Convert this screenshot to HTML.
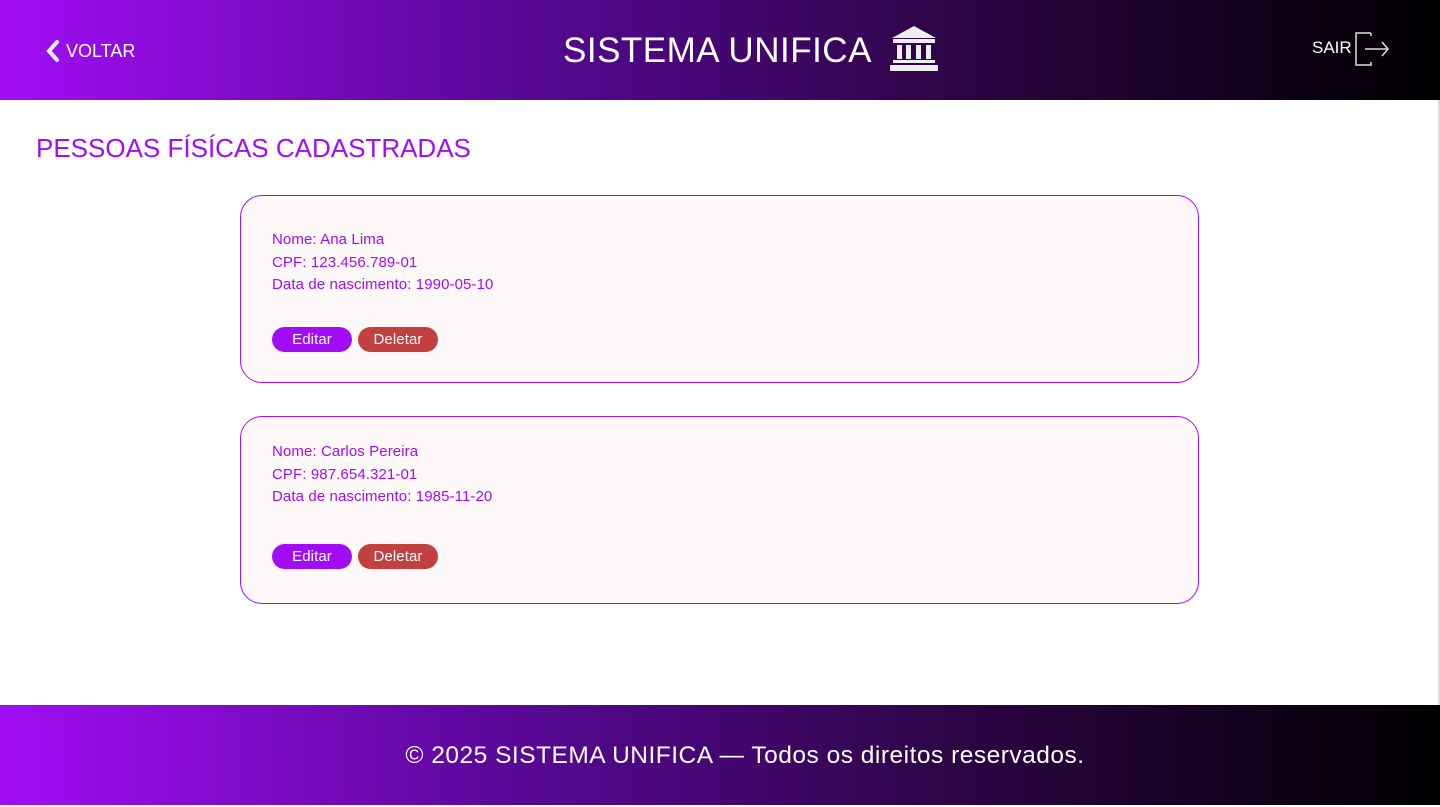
<!DOCTYPE html>
<html><head><meta charset="utf-8"><style>
*{margin:0;padding:0;box-sizing:border-box}
body{width:1440px;height:805px;overflow:hidden;background:#fff;font-family:"Liberation Sans",sans-serif;position:relative}
header{position:absolute;left:0;top:0;width:1440px;height:100px;background:linear-gradient(90deg,#a10ef5 0%,#5a0899 35%,#2e0548 65%,#000 100%);color:#fff}
.back{position:absolute;left:44px;top:39px;font-size:18px;display:flex;align-items:center;gap:4px}
.title{position:absolute;left:563px;top:31px;font-size:35px;letter-spacing:0.5px}
.bank{position:absolute;left:888px;top:24px}
.sair{position:absolute;left:1312px;top:38px;font-size:17px}
.exit{position:absolute;left:1354px;top:31px}
h1{position:absolute;left:36px;top:133px;font-weight:normal;font-size:26px;color:#a10ef5}
.card{position:absolute;left:240px;width:959px;border:1px solid #a10ef5;border-radius:22px;background:#fff8f8;padding:33px 0 0 31px;color:#a10ef5;font-size:15px;letter-spacing:0.1px}
.card p{line-height:22.5px}
.btns{position:absolute;left:31px;display:flex;gap:6px}
.b{width:80px;height:25px;border-radius:13px;color:#fff;font-size:15px;text-align:center;line-height:25px}
.e{background:#a10ef5}.d{background:#c34040}
footer{position:absolute;left:0;top:705px;width:1440px;height:100px;background:linear-gradient(90deg,#a10ef5 0%,#5a0899 35%,#2e0548 65%,#000 100%);color:#fff;font-size:24.5px;letter-spacing:0.5px;text-align:center;line-height:102px;padding-left:50px}
.edge{position:absolute;left:1438px;top:100px;width:2px;height:605px;background:#ddd}
</style></head><body>
<header>
<div class="back"><svg width="18" height="24" viewBox="0 0 18 24"><path d="M13 3 L5 12 L13 21" stroke="#eee" stroke-width="4" fill="none" stroke-linecap="round"/></svg>VOLTAR</div>
<div class="title">SISTEMA UNIFICA</div>
<svg class="bank" width="52" height="50" viewBox="0 0 52 50"><path d="M26 2 L48 14 L4 14 Z" fill="#eee"/><rect x="5" y="15" width="42" height="4" fill="#eee"/><rect x="9" y="21" width="5" height="14" fill="#eee"/><rect x="18" y="21" width="5" height="14" fill="#eee"/><rect x="28" y="21" width="5" height="14" fill="#eee"/><rect x="38" y="21" width="5" height="14" fill="#eee"/><rect x="5" y="36" width="42" height="3" fill="#eee"/><rect x="2" y="41" width="48" height="6" rx="1" fill="#eee"/></svg>
<div class="sair">SAIR</div>
<svg class="exit" width="36" height="36" viewBox="0 0 36 36"><path d="M17 2 H2 V34 H17 V31 M17 5 V2 M11 18 H34 M28 11 L34 18 L28 25" stroke="#ddd" stroke-width="1.5" fill="none"/></svg>
</header>
<h1>PESSOAS FÍSÍCAS CADASTRADAS</h1>
<div class="card" style="top:195px;height:188px"><p>Nome: Ana Lima</p><p>CPF: 123.456.789-01</p><p>Data de nascimento: 1990-05-10</p>
<div class="btns" style="top:131px"><div class="b e">Editar</div><div class="b d">Deletar</div></div></div>
<div class="card" style="top:416px;height:188px;padding-top:24px"><p>Nome: Carlos Pereira</p><p>CPF: 987.654.321-01</p><p>Data de nascimento: 1985-11-20</p>
<div class="btns" style="top:127px"><div class="b e">Editar</div><div class="b d">Deletar</div></div></div>
<div class="edge"></div>
<footer>© 2025 SISTEMA UNIFICA — Todos os direitos reservados.</footer>
</body></html>
